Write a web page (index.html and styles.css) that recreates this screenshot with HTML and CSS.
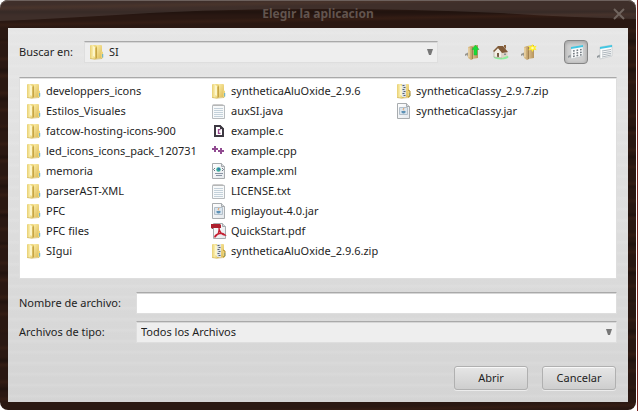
FILE: index.html
```html
<!DOCTYPE html>
<html lang="es">
<head>
<meta charset="utf-8">
<title>Elegir la aplicacion</title>
<link rel="stylesheet" href="styles.css">
</head>
<body>
<svg class="defs" aria-hidden="true">
  <defs>
    <linearGradient id="gold" x1="0" x2="1" y1="0" y2="1"><stop offset="0" stop-color="#fff3b4"/><stop offset="1" stop-color="#dcb94f"/></linearGradient>
    <linearGradient id="goldside" x1="0" x2="1"><stop offset="0" stop-color="#e8cf71"/><stop offset=".35" stop-color="#f7e9a4"/><stop offset="1" stop-color="#e5ca66"/></linearGradient>
    <linearGradient id="tan" x1="0" x2="1"><stop offset="0" stop-color="#e2c896"/><stop offset="1" stop-color="#b6935c"/></linearGradient>
    <linearGradient id="page" x1="0" x2="1" y1="0" y2="1"><stop offset="0" stop-color="#ffffff"/><stop offset="1" stop-color="#e4e8ec"/></linearGradient>
  </defs>
  <symbol id="folder" viewBox="0 0 16 16">
    <path d="M6 1h6q1 0 1 1v12l-7 1z" fill="url(#gold)"/>
    <path d="M12 7l2 1v6l-2 1z" fill="#ecd47b"/><path d="M13.300 10h.9v3.500h-.9z" fill="#49a8dd"/>
    <path d="M2 1h4l2 1v12l-2 1.500L2 15q-1 0-1-1V2q0-1 1-1z" fill="url(#goldside)"/>
    <path d="M4 2l2 1v10l-2-1z" fill="#fffbd8" opacity=".8"/>
    <path d="M6.500 4l1.500-1v11l-1.500 1z" fill="#bd9a3b" opacity=".8"/>
    <path d="M1 14.500l5 .7 7-.7" fill="none" stroke="#cbae55" stroke-width=".6"/>
  </symbol>
  <symbol id="zip" viewBox="0 0 16 16">
    <use href="#folder"/>
    <path d="M6 1h4v13H6z" fill="#dfe3e7"/>
    <path d="M6.500 2.500h2M7.500 4.500h2M6.500 6.500h2M7.500 8.500h2M6.500 10.500h2M7.500 12.500h2" stroke="#55616f"/>
    <path d="M12 7l2 1v5l-2 1" fill="none" stroke="#b58f2a"/>
  </symbol>
  <symbol id="text" viewBox="0 0 16 16">
    <path d="M1.500 2.500h12v13h-12z" fill="#f7f9fa" stroke="#b7bbbe"/>
    <path d="M2 1l1 2 1-2 1 2 1-2 1 2 1-2 1 2 1-2 1 2 1-2" fill="none" stroke="#b4b4b4" stroke-width=".8"/>
    <path d="M3 5.500h9M3 7.500h9M3 9.500h9M3 11.500h9M3 13.500h9" stroke="#c4d1da"/>
  </symbol>
  <symbol id="sheet" viewBox="0 0 16 16">
    <path d="M1.500.5h9l3 3v12h-12z" fill="url(#page)" stroke="#a8acaf"/><path d="M10.500.5v3h3" fill="#d6dadd" stroke="#a5a9ac"/>
  </symbol>
  <symbol id="jar" viewBox="0 0 16 16">
    <use href="#sheet"/><path d="M3.500 4.500h8v7h-8z" fill="#dae5ee" stroke="#b4c0ca"/>
    <path d="M8 5q-1.500 1.500 0 2.500" fill="none" stroke="#e59a59"/><path d="M5.500 8h4v1.500q-2 2-4 0z" fill="#5d91b5"/>
  </symbol>
  <symbol id="xml" viewBox="0 0 16 16">
    <use href="#sheet"/><circle cx="7.500" cy="6.500" r="2.200" fill="#38a99c"/><circle cx="8" cy="6" r="1" fill="#3771b0"/>
    <path d="M4 5L2.500 6.500 4 8M11 5l1.500 1.500L11 8" fill="none" stroke="#6b7983"/><path d="M4 10.500h8M5 12.500h6" stroke="#8a94a4"/>
  </symbol>
  <symbol id="csource" viewBox="0 0 16 16">
    <path d="M4 3h5l3 3v7H4z" fill="#fff" stroke="#3d3942" stroke-width="2"/><path d="M9 2v4h4z" fill="#3d3942"/>
    <path d="M9.500 6.700h-2v3.600h2" fill="none" stroke="#99478f" stroke-width="1.300"/>
  </symbol>
  <symbol id="cpp" viewBox="0 0 16 16"><path d="M4 3v6M1 6h6M10 5v6M7 8h6" stroke="#914b91" stroke-width="2"/></symbol>
  <symbol id="pdf" viewBox="0 0 16 16">
    <path d="M2.500.5h9l3 3v12h-12z" fill="url(#page)" stroke="#a8acaf"/><path d="M11.500.5v3h3" fill="#d6dadd" stroke="#a5a9ac"/>
    <path d="M0 1h9l1 1v3H0z" fill="#ad1f2d"/><path d="M0 5h2v1z" fill="#62111a"/>
    <path d="M8 5q1 5-4 9-1-1 3-3t7 1q-4 0-6-6" fill="none" stroke="#c42032" stroke-width="1.400"/>
  </symbol>
  <symbol id="brownfolder" viewBox="0 0 16 16">
    <path d="M0 10l4-2v6l-1-1-1-2-2 1z" fill="#98968f"/>
    <path d="M6 2l7-1v13l-6 1z" fill="url(#tan)"/><path d="M3 3l3-1 2 1v12l-2 1-3-2z" fill="url(#tan)"/>
    <path d="M7.500 3v12" stroke="#98794c" stroke-width=".7"/><path d="M4 4v9" stroke="#f0d9ac"/>
  </symbol>
  <symbol id="up" viewBox="0 0 16 16"><use href="#brownfolder"/><path d="M10.500 1L14 5.500h-2V11H9V5.500H7z" fill="#18dd36" stroke="#25b33b" stroke-width=".5"/></symbol>
  <symbol id="new" viewBox="0 0 16 16"><use href="#brownfolder"/><path d="M11.500 0l1.200 2.200 3-.5-1.500 2.300 1.500 2.200-3-.4-1.200 2.200-1.200-2.200-3 .4L8.800 4 7.300 1.700l3 .5z" fill="#ffee2e"/><circle cx="11.500" cy="4" r="1.300" fill="#fffcae"/></symbol>
  <symbol id="home" viewBox="0 0 16 16">
    <ellipse cx="8" cy="13" rx="7.500" ry="2.600" fill="#8af09b"/>
    <path d="M1 8l4-4 4 4v6l-8-1z" fill="#f3efe6" stroke="#aaa294" stroke-width=".6"/><path d="M9 8h5.500v4L9 14z" fill="#ddd5c6"/>
    <path d="M5 2h5l5 6-6 1-4-5-4 4-1-1z" fill="#805a38"/><path d="M11 1h2v4l-2-2z" fill="#89613b"/>
    <path d="M4 9h2v4l-2-.3z" fill="#765c43"/><path d="M11 9.500h2v1.500h-2z" fill="#8b8f94"/>
  </symbol>
  <symbol id="board" viewBox="0 0 16 16">
    <path d="M0 12l4-2v5l-2-2-2 1z" fill="#92989c"/><path d="M3 3l12-2v11L3 15z" fill="#fbfcfc" stroke="#c2c7ca" stroke-width=".7"/>
    <path d="M3 3l12-2v2L3 5z" fill="#42c6e2"/>
  </symbol>
  <symbol id="grid" viewBox="0 0 16 16"><use href="#board"/><path d="M5 7l1.700-.3M8.500 6.400l1.700-.3M12 5.800l1.700-.3M5 9.700l1.700-.3M8.500 9.100l1.700-.3M12 8.500l1.700-.3M5 12.400l1.700-.4M8.500 11.700l1.700-.4M12 11l1.700-.3" stroke="#737b82" stroke-width="1.500"/></symbol>
  <symbol id="details" viewBox="0 0 16 16"><use href="#board"/><path d="M5 7l9-1.500M5 9l9-1.500M5 11l9-1.700M5 13l9-2" stroke="#a5aeb4" stroke-width=".9"/></symbol>
</svg>

<section class="window" aria-labelledby="window-title">
  <header class="titlebar">
    <svg class="gloss" viewBox="0 0 636 28" preserveAspectRatio="none" aria-hidden="true"><path d="M0 0h636v19Q560 17 500 13 320 5 150 13 70 18 0 21z"/></svg>
    <h1 id="window-title">Elegir la aplicacion</h1>
    <button class="close" type="button" aria-label="Cerrar"><svg viewBox="0 0 12 12"><path d="M1 1l10 10M11 1L1 11"/></svg></button>
  </header>
  <main class="panel">
    <div class="toolbar">
      <label for="look-in">Buscar en:</label>
      <div class="field combo folder-combo">
        <svg class="icon"><use href="#folder"/></svg>
        <select id="look-in"><option>SI</option></select>
        <svg class="arrow" viewBox="0 0 6 6"><path d="M0 0h6L4 6H2z"/></svg>
      </div>
      <div class="tools">
        <button type="button" aria-label="Subir un nivel"><svg class="icon"><use href="#up"/></svg></button>
        <button type="button" aria-label="Inicio"><svg class="icon"><use href="#home"/></svg></button>
        <button type="button" aria-label="Crear carpeta"><svg class="icon"><use href="#new"/></svg></button>
      </div>
      <div class="views">
        <button class="pressed" type="button" aria-label="Lista" aria-pressed="true"><svg class="icon"><use href="#grid"/></svg></button>
        <button type="button" aria-label="Detalles" aria-pressed="false"><svg class="icon"><use href="#details"/></svg></button>
      </div>
    </div>
    <ul class="files">
      <li><svg class="icon"><use href="#folder"/></svg>developpers_icons</li>
      <li><svg class="icon"><use href="#folder"/></svg>Estilos_Visuales</li>
      <li><svg class="icon"><use href="#folder"/></svg>fatcow-hosting-icons-900</li>
      <li><svg class="icon"><use href="#folder"/></svg>led_icons_icons_pack_120731</li>
      <li><svg class="icon"><use href="#folder"/></svg>memoria</li>
      <li><svg class="icon"><use href="#folder"/></svg>parserAST-XML</li>
      <li><svg class="icon"><use href="#folder"/></svg>PFC</li>
      <li><svg class="icon"><use href="#folder"/></svg>PFC files</li>
      <li><svg class="icon"><use href="#folder"/></svg>SIgui</li>
      <li><svg class="icon"><use href="#folder"/></svg>syntheticaAluOxide_2.9.6</li>
      <li><svg class="icon"><use href="#text"/></svg>auxSI.java</li>
      <li><svg class="icon"><use href="#csource"/></svg>example.c</li>
      <li><svg class="icon"><use href="#cpp"/></svg>example.cpp</li>
      <li><svg class="icon"><use href="#xml"/></svg>example.xml</li>
      <li><svg class="icon"><use href="#text"/></svg>LICENSE.txt</li>
      <li><svg class="icon"><use href="#jar"/></svg>miglayout-4.0.jar</li>
      <li><svg class="icon"><use href="#pdf"/></svg>QuickStart.pdf</li>
      <li><svg class="icon"><use href="#zip"/></svg>syntheticaAluOxide_2.9.6.zip</li>
      <li><svg class="icon"><use href="#zip"/></svg>syntheticaClassy_2.9.7.zip</li>
      <li><svg class="icon"><use href="#jar"/></svg>syntheticaClassy.jar</li>
    </ul>
    <div class="form">
      <label for="file-name">Nombre de archivo:</label>
      <input class="field" id="file-name" type="text">
      <label for="file-type">Archivos de tipo:</label>
      <div class="field combo">
        <select id="file-type"><option>Todos los Archivos</option></select>
        <svg class="arrow" viewBox="0 0 6 6"><path d="M0 0h6L4 6H2z"/></svg>
      </div>
    </div>
    <div class="actions">
      <button type="button">Abrir</button>
      <button type="button">Cancelar</button>
    </div>
  </main>
</section>
</body>
</html>
```

FILE: styles.css
```css
* { box-sizing: border-box; }

body {
  margin: 0;
  padding-right: 2px;
  background: linear-gradient(to left, #7a2420 1px, #ffffff 1px);
  color: #1e1e1e;
  font: 11px/16px "Noto Sans", "Open Sans", sans-serif;
}

button, input, select { font: inherit; color: inherit; }

.defs { position: absolute; width: 0; height: 0; }
.icon { display: block; width: 16px; height: 16px; flex: none; }

.window {
  padding: 0 8px 8px;
  border-radius: 8px;
  background:
    repeating-linear-gradient(179deg, transparent 0 5px, rgba(92, 48, 28, 0.2) 8px, transparent 11px 17px),
    repeating-linear-gradient(180deg, transparent 0 9px, rgba(0, 0, 0, 0.22) 12px, transparent 16px 29px),
    #2a1812;
}

.titlebar {
  position: relative;
  display: grid;
  grid-template-columns: 1fr auto 1fr;
  align-items: center;
  height: 28px;
  margin: 0 -8px;
  padding: 0 10px;
  border-radius: 8px 8px 0 0;
  overflow: hidden;
  box-shadow: inset 0 1px #5d504b;
}
.gloss { position: absolute; inset: 0; width: 100%; height: 100%; }
.gloss path { fill: #ffffff; opacity: 0.1; }

h1 {
  position: relative;
  grid-column: 2;
  margin: 0;
  color: #62544e;
  font-size: 12px;
  line-height: 28px;
}

.close {
  position: relative;
  justify-self: end;
  width: 14px;
  height: 14px;
  padding: 1px;
  border: 0;
  background: none;
}
.close svg { display: block; width: 12px; height: 12px; }
.close path { stroke: #70645e; stroke-width: 2; }

.panel {
  padding: 12px 11px;
  background:
    repeating-linear-gradient(180deg, transparent 0 3px, rgba(255, 255, 255, 0.1) 5px, transparent 8px 11px),
    linear-gradient(#e6e6e6, #d4d4d4);
}

.toolbar { display: flex; align-items: center; height: 24px; }
.toolbar label { width: 65px; }

.tools, .views { display: flex; align-items: center; margin-left: 23px; }
.tools { gap: 4px; }
.views { gap: 5px; }
.tools button, .views button {
  width: 24px;
  height: 24px;
  padding: 3px;
  border: 1px solid transparent;
  border-radius: 4px;
  background: none;
}
.views .pressed {
  border-color: #858585;
  background: #cfcfcf;
  box-shadow: inset 0 1px 4px #999999;
}

.field {
  min-width: 0;
  height: 22px;
  border: 1px solid #dedede;
  border-top-color: #a9a9a9;
  background: #ffffff;
  box-shadow: inset 0 1px #d6d6d6;
}
input.field { padding: 0 4px; }

.combo { display: flex; align-items: center; padding-right: 4px; background: #eeeeee; }
.folder-combo { flex: 1; padding-left: 4px; }
.combo select {
  flex: 1;
  min-width: 0;
  height: 20px;
  padding: 0 4px;
  border: 0;
  background: none;
  appearance: none;
}
.arrow { width: 6px; height: 6px; flex: none; fill: #777777; pointer-events: none; }

.files {
  display: grid;
  grid-template-rows: repeat(9, 20px);
  grid-auto-flow: column;
  grid-auto-columns: 185px;
  margin: 13px 0;
  padding: 3px 6px 17px;
  border: 1px solid #dedede;
  border-top-color: #a9a9a9;
  background: #ffffff;
  box-shadow: inset 0 1px #e2e2e2;
  list-style: none;
}
.files li { display: flex; align-items: center; gap: 4px; white-space: nowrap; }

.form {
  display: grid;
  grid-template-columns: 117px 1fr;
  align-items: center;
  row-gap: 7px;
}

.actions { display: flex; justify-content: flex-end; gap: 14px; margin-top: 23px; padding-right: 1px; }
.actions button {
  width: 74px;
  height: 24px;
  padding: 0;
  border: 1px solid #b0b0b0;
  border-radius: 3px;
  background: linear-gradient(#e6e6e6, #cecece);
  box-shadow: inset 0 1px #f8f8f8, 0 1px #ececec;
}
```
